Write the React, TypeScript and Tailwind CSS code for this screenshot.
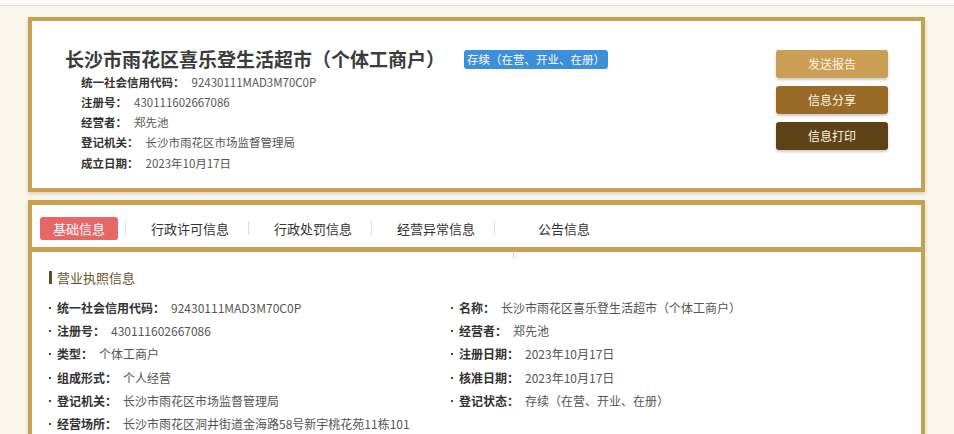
import React from 'react';

type Field = {
  label: string;
  value: string;
};

const summary: Field[] = [
  { label: '统一社会信用代码', value: '92430111MAD3M70C0P' },
  { label: '注册号', value: '430111602667086' },
  { label: '经营者', value: '郑先池' },
  { label: '登记机关', value: '长沙市雨花区市场监督管理局' },
  { label: '成立日期', value: '2023年10月17日' },
];

const leftFields: Field[] = [
  { label: '统一社会信用代码', value: '92430111MAD3M70C0P' },
  { label: '注册号', value: '430111602667086' },
  { label: '类型', value: '个体工商户' },
  { label: '组成形式', value: '个人经营' },
  { label: '登记机关', value: '长沙市雨花区市场监督管理局' },
  { label: '经营场所', value: '长沙市雨花区洞井街道金海路58号新宇桃花苑11栋101' },
];

const rightFields: Field[] = [
  { label: '名称', value: '长沙市雨花区喜乐登生活超市（个体工商户）' },
  { label: '经营者', value: '郑先池' },
  { label: '注册日期', value: '2023年10月17日' },
  { label: '核准日期', value: '2023年10月17日' },
  { label: '登记状态', value: '存续（在营、开业、在册）' },
];

const tabs = ['行政许可信息', '行政处罚信息', '经营异常信息'];

function DetailRow({ label, value }: Field) {
  return (
    <div className="flex h-[23.2px] items-center text-[12px]">
      <span className="mr-[6px] inline-block h-[2px] w-[2px] bg-[#444]" />
      <span className="font-bold text-[#333]">{label}：</span>
      <span className="ml-[6px] text-[#555]">{value}</span>
    </div>
  );
}

export default function App() {
  return (
    <div
      className="min-h-screen bg-[#faf6eb]"
      style={{ fontFamily: '"Noto Sans CJK SC", "Noto Sans", sans-serif' }}
    >
      <div className="h-[6px] border-b border-[#e4e1db] bg-[#fdfcf9]" />

      <div className="pl-[28px] pr-[29px]">
        {/* summary card */}
        <div className="mt-[11px] flex border-4 border-[#c8a052] bg-white shadow-[0_2px_4px_rgba(0,0,0,0.15)]">
          <div className="flex-1 pl-[33px] pt-[26px] pb-[15px]">
            <div className="flex items-center">
              <h1 className="text-[19px] font-bold leading-[24px] text-[#3c3c3c]">
                长沙市雨花区喜乐登生活超市（个体工商户）
              </h1>
              <span className="ml-[19px] rounded-[3px] bg-[#3d8fd9] px-[3px] text-[11.5px] leading-[19px] text-white">
                存续（在营、开业、在册）
              </span>
            </div>
            <div className="ml-[16px] mt-[1px]">
              {summary.map((f) => (
                <div key={f.label} className="flex h-[20.3px] items-center text-[11.5px]">
                  <span className="font-bold text-[#333]">{f.label}：</span>
                  <span className="ml-[7px] text-[#555]">{f.value}</span>
                </div>
              ))}
            </div>
          </div>
          <div className="mr-[33px] mt-[29px] flex flex-col gap-[8px]">
            <button className="h-[28px] w-[112px] rounded-[3px] bg-[#c99e55] text-[12px] text-[#fff6e3] shadow-[0_2px_3px_rgba(0,0,0,0.2)]">
              发送报告
            </button>
            <button className="h-[28px] w-[112px] rounded-[3px] bg-[#9a6a29] text-[12px] text-[#fff6e3] shadow-[0_2px_3px_rgba(0,0,0,0.2)]">
              信息分享
            </button>
            <button className="h-[28px] w-[112px] rounded-[3px] bg-[#5e4318] text-[12px] text-[#fff6e3] shadow-[0_2px_3px_rgba(0,0,0,0.2)]">
              信息打印
            </button>
          </div>
        </div>

        {/* detail card */}
        <div className="mt-[8px] border-x-4 border-t-[5px] border-[#c8a052] bg-white shadow-[0_2px_4px_rgba(0,0,0,0.15)]">
          <div className="relative flex h-[47px] items-center whitespace-nowrap border-b-[5px] border-[#c8a052] pl-[8px] pt-[4px] text-[13px] text-[#333]">
            <span className="flex h-[23px] w-[78px] items-center justify-center rounded-[3px] bg-[#e86666] text-white">
              基础信息
            </span>
            <span className="ml-[7px] h-[14px] w-px bg-[#ddd]" />
            {tabs.map((t) => (
              <React.Fragment key={t}>
                <span className="ml-[25px]">{t}</span>
                <span className="ml-[19px] h-[14px] w-px bg-[#ddd]" />
              </React.Fragment>
            ))}
            <span className="ml-[43px]">公告信息</span>
            <span className="absolute bottom-[-11px] left-[481px] h-[7px] w-px bg-[#ccc]" />
          </div>

          <div className="pb-[12px] pl-[17px] pt-[15px]">
            <div className="flex h-[20px] items-center text-[13px] text-[#6a5230]">
              <span className="mr-[5px] h-[13px] w-[3px] bg-[#6b4a1f]" />
              营业执照信息
            </div>
            <div className="mt-[9px] grid grid-cols-[402px_1fr]">
              <div>
                {leftFields.map((f) => (
                  <DetailRow key={f.label} {...f} />
                ))}
              </div>
              <div>
                {rightFields.map((f) => (
                  <DetailRow key={f.label} {...f} />
                ))}
              </div>
            </div>
          </div>
        </div>
      </div>
    </div>
  );
}
